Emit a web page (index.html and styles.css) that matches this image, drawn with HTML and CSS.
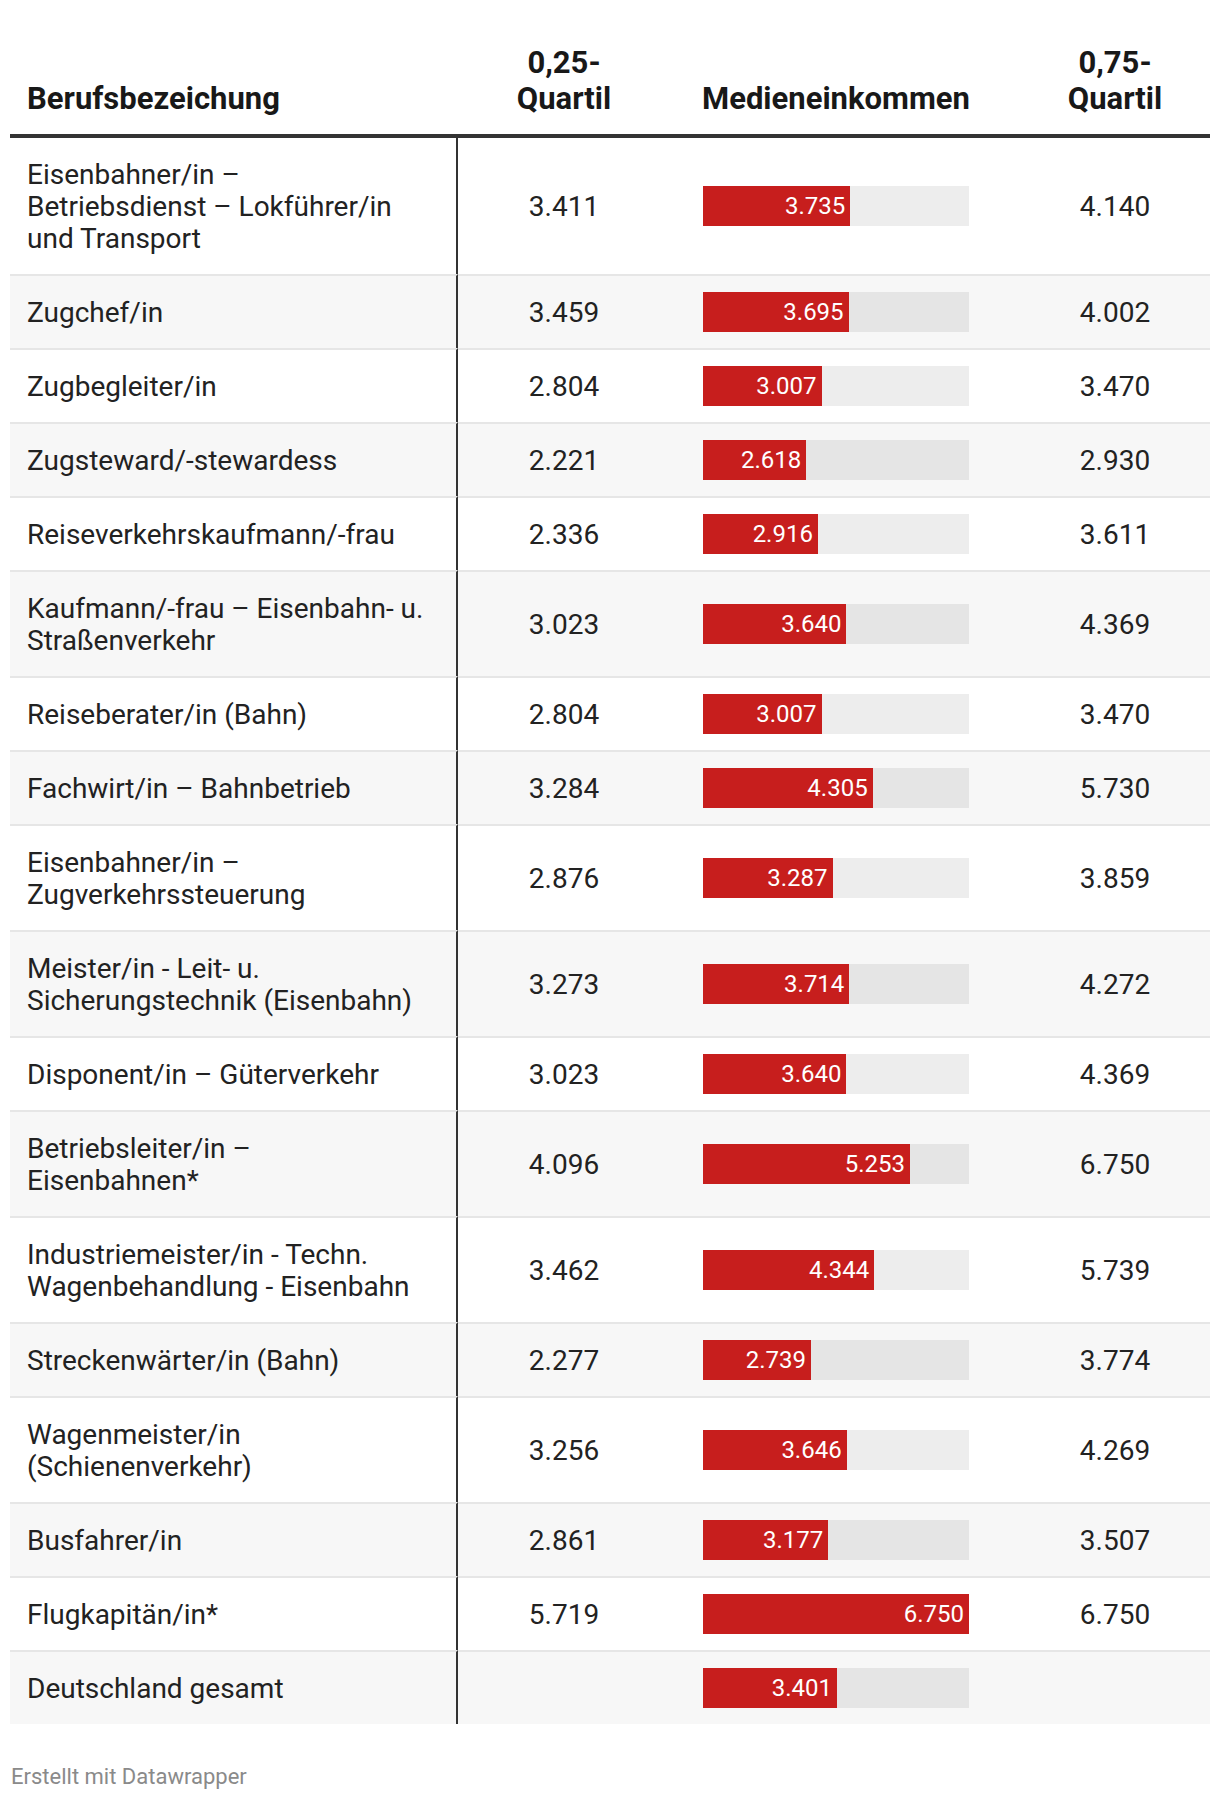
FILE: index.html
```html
<!DOCTYPE html>
<html lang="de">
<head>
<meta charset="utf-8">
<title>Einkommen Bahnberufe</title>
<link rel="stylesheet" href="styles.css">
</head>
<body>
<div class="chart">
  <table class="dw-table">
    <colgroup>
      <col class="c-name">
      <col class="c-q1">
      <col class="c-med">
      <col class="c-q3">
    </colgroup>
    <thead>
      <tr>
        <th class="h-name">Berufsbezeichung</th>
        <th class="h-num">0,25-<br>Quartil</th>
        <th class="h-med">Medieneinkommen</th>
        <th class="h-num">0,75-<br>Quartil</th>
      </tr>
    </thead>
    <tbody>
      <tr><td class="name">Eisenbahner/in –<br>Betriebsdienst – Lokführer/in<br>und Transport</td><td class="num">3.411</td><td class="med"><div class="bar"><div class="fill" style="width:55.33%">3.735</div></div></td><td class="num">4.140</td></tr>
      <tr><td class="name">Zugchef/in</td><td class="num">3.459</td><td class="med"><div class="bar"><div class="fill" style="width:54.74%">3.695</div></div></td><td class="num">4.002</td></tr>
      <tr><td class="name">Zugbegleiter/in</td><td class="num">2.804</td><td class="med"><div class="bar"><div class="fill" style="width:44.55%">3.007</div></div></td><td class="num">3.470</td></tr>
      <tr><td class="name">Zugsteward/-stewardess</td><td class="num">2.221</td><td class="med"><div class="bar"><div class="fill" style="width:38.79%">2.618</div></div></td><td class="num">2.930</td></tr>
      <tr><td class="name">Reiseverkehrskaufmann/-frau</td><td class="num">2.336</td><td class="med"><div class="bar"><div class="fill" style="width:43.20%">2.916</div></div></td><td class="num">3.611</td></tr>
      <tr><td class="name">Kaufmann/-frau – Eisenbahn- u.<br>Straßenverkehr</td><td class="num">3.023</td><td class="med"><div class="bar"><div class="fill" style="width:53.93%">3.640</div></div></td><td class="num">4.369</td></tr>
      <tr><td class="name">Reiseberater/in (Bahn)</td><td class="num">2.804</td><td class="med"><div class="bar"><div class="fill" style="width:44.55%">3.007</div></div></td><td class="num">3.470</td></tr>
      <tr><td class="name">Fachwirt/in – Bahnbetrieb</td><td class="num">3.284</td><td class="med"><div class="bar"><div class="fill" style="width:63.78%">4.305</div></div></td><td class="num">5.730</td></tr>
      <tr><td class="name">Eisenbahner/in –<br>Zugverkehrssteuerung</td><td class="num">2.876</td><td class="med"><div class="bar"><div class="fill" style="width:48.70%">3.287</div></div></td><td class="num">3.859</td></tr>
      <tr><td class="name">Meister/in - Leit- u.<br>Sicherungstechnik (Eisenbahn)</td><td class="num">3.273</td><td class="med"><div class="bar"><div class="fill" style="width:55.02%">3.714</div></div></td><td class="num">4.272</td></tr>
      <tr><td class="name">Disponent/in – Güterverkehr</td><td class="num">3.023</td><td class="med"><div class="bar"><div class="fill" style="width:53.93%">3.640</div></div></td><td class="num">4.369</td></tr>
      <tr><td class="name">Betriebsleiter/in –<br>Eisenbahnen*</td><td class="num">4.096</td><td class="med"><div class="bar"><div class="fill" style="width:77.82%">5.253</div></div></td><td class="num">6.750</td></tr>
      <tr><td class="name">Industriemeister/in - Techn.<br>Wagenbehandlung - Eisenbahn</td><td class="num">3.462</td><td class="med"><div class="bar"><div class="fill" style="width:64.36%">4.344</div></div></td><td class="num">5.739</td></tr>
      <tr><td class="name">Streckenwärter/in (Bahn)</td><td class="num">2.277</td><td class="med"><div class="bar"><div class="fill" style="width:40.58%">2.739</div></div></td><td class="num">3.774</td></tr>
      <tr><td class="name">Wagenmeister/in<br>(Schienenverkehr)</td><td class="num">3.256</td><td class="med"><div class="bar"><div class="fill" style="width:54.01%">3.646</div></div></td><td class="num">4.269</td></tr>
      <tr><td class="name">Busfahrer/in</td><td class="num">2.861</td><td class="med"><div class="bar"><div class="fill" style="width:47.07%">3.177</div></div></td><td class="num">3.507</td></tr>
      <tr><td class="name">Flugkapitän/in*</td><td class="num">5.719</td><td class="med"><div class="bar"><div class="fill" style="width:100%">6.750</div></div></td><td class="num">6.750</td></tr>
      <tr><td class="name">Deutschland gesamt</td><td class="num"></td><td class="med"><div class="bar"><div class="fill" style="width:50.39%">3.401</div></div></td><td class="num"></td></tr>
    </tbody>
  </table>
  <div class="footer">Erstellt mit Datawrapper</div>
</div>
</body>
</html>
```

FILE: styles.css
```css
html, body {
  margin: 0;
  padding: 0;
  background: #ffffff;
}

body {
  font-family: Roboto, "Liberation Sans", Arial, sans-serif;
  color: #222222;
}

.chart {
  padding: 45px 10px 0 10px;
}

.dw-table {
  width: 1200px;
  table-layout: fixed;
  border-collapse: separate;
  border-spacing: 0;
}

.c-name { width: 448px; }
.c-q1 { width: 208px; }
.c-med { width: 350px; }
.c-q3 { width: 194px; }

th {
  font-weight: 700;
  font-size: 31px;
  line-height: 36px;
  color: #181818;
  vertical-align: bottom;
  padding: 0 0 17px 0;
  border-bottom: 4px solid #333333;
}

.h-name {
  text-align: left;
  padding-left: 17px;
}

.h-num {
  text-align: center;
  padding-left: 4px;
}

.h-med {
  text-align: left;
  padding-left: 36px;
}

td {
  font-size: 28px;
  line-height: 32px;
  padding: 21px 0 19px 0;
  vertical-align: middle;
  border-top: 2px solid #e6e6e6;
}

tbody tr:first-child td {
  border-top: 0;
}

tbody tr:nth-child(even) td {
  background: #f7f7f7;
}

td.name {
  padding-left: 17px;
  padding-right: 12px;
  border-right: 2px solid #333333;
}

td.num {
  text-align: center;
  padding-left: 4px;
}

td.med {
  padding: 0 0 0 37px;
}

.bar {
  width: 266px;
  height: 40px;
  background: rgba(0, 0, 0, 0.07);
}

.fill {
  height: 40px;
  background: #c71e1d;
  color: #ffffff;
  font-size: 24px;
  line-height: 40px;
  text-align: right;
  padding-right: 5px;
  box-sizing: border-box;
  white-space: nowrap;
}

.footer {
  margin-top: 40px;
  font-size: 22px;
  line-height: 26px;
  color: #8a8a8a;
  padding-left: 1px;
}
```
